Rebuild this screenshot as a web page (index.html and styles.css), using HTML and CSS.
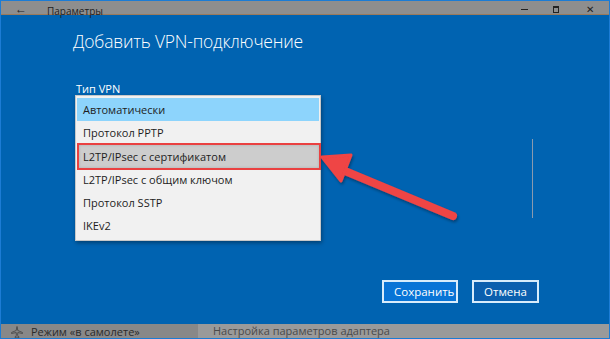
FILE: index.html
```html
<!DOCTYPE html>
<html lang="ru">
<head>
    <meta charset="UTF-8">
    <title>Параметры</title>
    <link rel="stylesheet" href="styles.css">
</head>
<body>
    <div class="window">
        <div class="titlebar">
            <span class="back">&#8592;</span>
            <span class="app-name">Параметры</span>
            <div class="controls">
                <span class="ctl ctl-min"></span>
                <span class="ctl ctl-max"></span>
                <span class="ctl ctl-close">&#10005;</span>
            </div>
        </div>

        <div class="content">
            <h1>Добавить VPN-подключение</h1>
            <div class="label">Тип VPN</div>
            <div class="form-row">
                <ul class="dropdown">
                    <li class="selected">Автоматически</li>
                    <li>Протокол PPTP</li>
                    <li class="hover">L2TP/IPsec с сертификатом</li>
                    <li>L2TP/IPsec с общим ключом</li>
                    <li>Протокол SSTP</li>
                    <li>IKEv2</li>
                </ul>
                <div class="scroll-line"></div>
            </div>
            <div class="buttons">
                <button class="btn btn-primary">Сохранить</button>
                <button class="btn">Отмена</button>
            </div>
        </div>

        <div class="statusbar">
            <div class="status-left">
                <svg class="plane" width="12" height="12" viewBox="0 0 12 12">
                    <path d="M6 0.5 L6.8 4.5 L11.5 6.5 L11.5 7.5 L6.8 6.5 L6.6 9.5 L8 10.8 L8 11.5 L6 11 L4 11.5 L4 10.8 L5.4 9.5 L5.2 6.5 L0.5 7.5 L0.5 6.5 L5.2 4.5 Z" fill="none" stroke="#4a4a4a" stroke-width="0.9"/>
                </svg>
                <span>Режим «в самолете»</span>
            </div>
            <div class="status-right">Настройка параметров адаптера</div>
        </div>

        <!-- стрелка-указатель -->
        <svg class="arrow" width="610" height="339" viewBox="0 0 610 339">
            <defs>
                <filter id="sh" x="-20%" y="-20%" width="140%" height="140%">
                    <feDropShadow dx="1" dy="2" stdDeviation="1.5" flood-color="#000" flood-opacity="0.35"/>
                </filter>
            </defs>
            <g filter="url(#sh)" fill="#ef4444" stroke="#ef4444" stroke-linejoin="round" stroke-linecap="round">
                <line x1="345" y1="171" x2="453" y2="216" stroke-width="8"/>
                <polygon points="322,157 351,155 341,181" stroke-width="3"/>
            </g>
        </svg>
    </div>
</body>
</html>
```

FILE: styles.css
```css
* {
    box-sizing: border-box;
}

body {
    margin: 0;
    font-family: "Open Sans", "Noto Sans", sans-serif;
    background: #1c7cd5;
}

.window {
    position: relative;
    width: 610px;
    height: 339px;
    border: 1px solid #1c7cd5;
    display: flex;
    flex-direction: column;
    overflow: hidden;
}

.titlebar {
    height: 14px;
    background: #8e8e8e;
    border-bottom: 1px solid #9a7a5c;
    display: flex;
    align-items: flex-end;
    font-size: 10px;
    color: #1e1e1e;
    line-height: 10px;
}

.back {
    width: 46px;
    padding-left: 14px;
    font-size: 12px;
}

.app-name {
    position: relative;
    top: 2px;
}

.controls {
    margin-left: auto;
    display: flex;
    align-items: center;
    height: 14px;
    padding-top: 4px;
}

.ctl {
    display: block;
}

.ctl-min {
    width: 7px;
    border-top: 1px solid #222;
    margin-right: 25px;
}

.ctl-max {
    width: 6px;
    height: 7px;
    border: 1px solid #222;
    border-top-width: 2px;
    margin-right: 27px;
}

.ctl-close {
    font-size: 10px;
    margin-right: 15px;
}

.content {
    flex: 1;
    background: #0063b1;
    padding: 14px 0 0 72px;
    color: #fff;
}

h1 {
    margin: 0;
    font-size: 17.5px;
    font-weight: 300;
    line-height: 25px;
    letter-spacing: -0.2px;
}

.label {
    margin-top: 28px;
    font-size: 11px;
    line-height: 13px;
    padding-left: 3px;
}

.form-row {
    display: flex;
    align-items: flex-start;
}

.dropdown {
    list-style: none;
    margin: 0 0 0 2px;
    padding: 2px 1px 3px 1px;
    width: 246px;
    background: #f1f1f1;
    border: 1px solid #c8c8c8;
    box-shadow: 1px 2px 4px rgba(0, 0, 0, 0.35);
    font-size: 11px;
    color: #1d1d1d;
}

.dropdown li {
    height: 23px;
    line-height: 23px;
    padding-left: 6px;
}

.dropdown li.selected {
    background: #8dd4fc;
}

.dropdown li.hover {
    background: #cdcdcd;
    outline: 2px solid #ea4141;
    outline-offset: 0;
    margin: 1px 0 0 2px;
    padding-left: 4px;
    box-shadow: inset 0 0 3px rgba(0, 0, 0, 0.15);
}

.scroll-line {
    width: 1px;
    height: 79px;
    background: #8a9aae;
    margin: 44px 0 0 211px;
}

.buttons {
    display: flex;
    gap: 14px;
    margin: 39px 0 0 309px;
}

.btn {
    height: 23px;
    padding: 0 10px;
    border: 2px solid #d8ecfb;
    background: #0a5fae;
    color: #fff;
    font-family: "Open Sans", "Noto Sans", sans-serif;
    font-size: 11.5px;
    line-height: 18px;
}

.btn-primary {
    width: 76px;
    background: #0874d6;
}

.btn + .btn {
    width: 67px;
}

.statusbar {
    height: 14px;
    display: flex;
    font-size: 11px;
    line-height: 13px;
}

.status-left {
    width: 197px;
    background: #888;
    color: #2b2b2b;
    display: flex;
    align-items: flex-start;
    gap: 8px;
    padding: 1px 0 0 10px;
}

.plane {
    flex-shrink: 0;
    margin-top: 1px;
}

.status-right {
    flex: 1;
    background: #9a9a9a;
    color: #4a4a4a;
    padding: 0 0 0 15px;
}

.arrow {
    position: absolute;
    left: -1px;
    top: -1px;
    pointer-events: none;
}
```
